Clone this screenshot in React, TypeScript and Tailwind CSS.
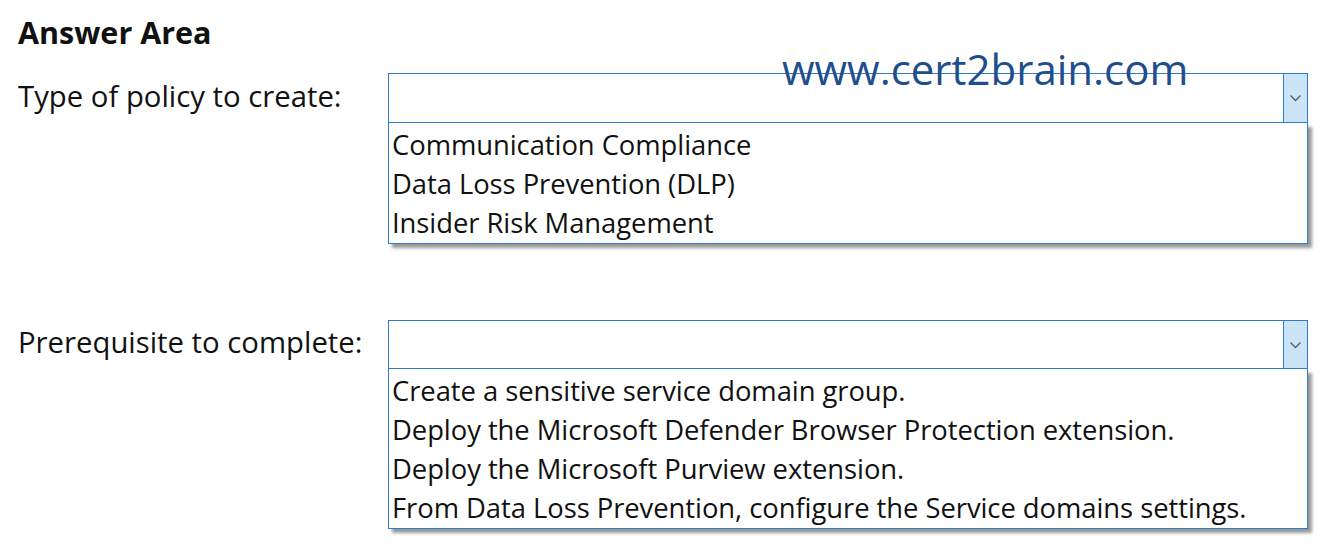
import React from "react";

const font = { fontFamily: '"Open Sans", "Noto Sans", sans-serif' };

function Chevron() {
  return (
    <svg width="13" height="8" viewBox="0 0 13 8" fill="none">
      <path d="M1.5 1.5 L6.5 6.5 L11.5 1.5" stroke="#5a5a5a" strokeWidth="1.3" />
    </svg>
  );
}

function Dropdown({ options, h }: { options: string[]; h: string }) {
  return (
    <div className="flex flex-col w-[920px]">
      <div className={`flex ${h} border border-[#2b7cd3] bg-white`}>
        <div className="flex-1" />
        <div className="w-[24px] border-l border-[#2b7cd3] bg-[#cce4f7] flex items-center justify-center">
          <Chevron />
        </div>
      </div>
      <div className="border border-t-0 border-[#2b7cd3] bg-white shadow-[4px_4px_3px_rgba(0,0,0,0.4)] pt-[2px] pb-[1px]">
        {options.map((o) => (
          <div key={o} className="h-[39px] leading-[39px] pl-[3px] text-[27.4px] tracking-[-0.05px] text-[#111] whitespace-nowrap">
            {o}
          </div>
        ))}
      </div>
    </div>
  );
}

export default function App() {
  return (
    <div className="relative w-[1334px] h-[555px] bg-white pl-[18px] pt-[12px]" style={font}>
      <div className="text-[30.5px] font-bold text-[#111] leading-[40px]">Answer Area</div>
      <div className="flex mt-[21px]">
        <div className="w-[370px] text-[29.3px] text-[#111] leading-[46px]">Type of policy to create:</div>
        <Dropdown
          h="h-[50px]"
          options={["Communication Compliance", "Data Loss Prevention (DLP)", "Insider Risk Management"]}
        />
      </div>
      <div className="flex mt-[76px]">
        <div className="w-[370px] text-[29.3px] text-[#111] leading-[44px]">Prerequisite to complete:</div>
        <Dropdown
          h="h-[49px]"
          options={[
            "Create a sensitive service domain group.",
            "Deploy the Microsoft Defender Browser Protection extension.",
            "Deploy the Microsoft Purview extension.",
            "From Data Loss Prevention, configure the Service domains settings.",
          ]}
        />
      </div>
      <div className="absolute left-[782px] top-[41px] text-[42px] leading-[56px] text-[#1f4e8c]">www.cert2brain.com</div>
    </div>
  );
}
